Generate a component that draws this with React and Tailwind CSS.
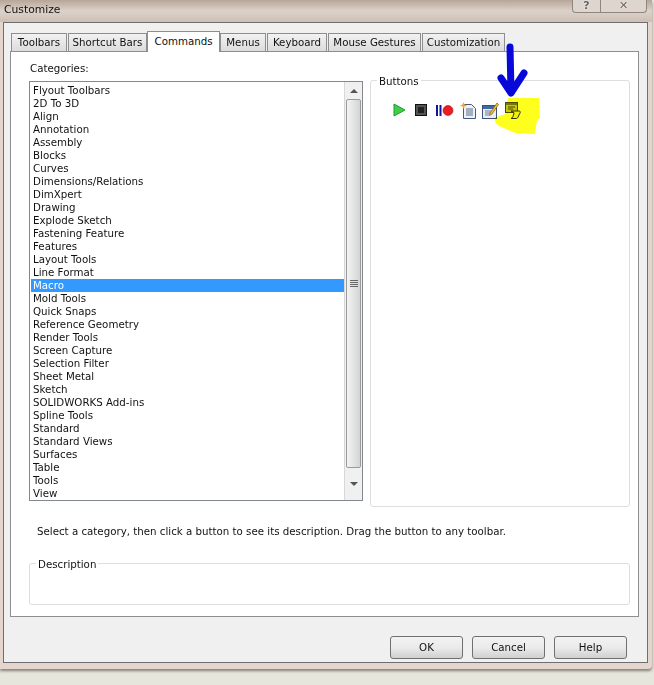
const tabs = [
  { name: "Toolbars", w: "w-[56px]" },
  { name: "Shortcut Bars", w: "w-[79px]" },
  { name: "Commands", w: "w-[73px]", active: true },
  { name: "Menus", w: "w-[46px]" },
  { name: "Keyboard", w: "w-[60px]" },
  { name: "Mouse Gestures", w: "w-[93px]" },
  { name: "Customization", w: "w-[83px]" },
]

const categories = [
  "Flyout Toolbars", "2D To 3D", "Align", "Annotation", "Assembly", "Blocks", "Curves",
  "Dimensions/Relations", "DimXpert", "Drawing", "Explode Sketch", "Fastening Feature",
  "Features", "Layout Tools", "Line Format", "Macro", "Mold Tools", "Quick Snaps",
  "Reference Geometry", "Render Tools", "Screen Capture", "Selection Filter", "Sheet Metal",
  "Sketch", "SOLIDWORKS Add-ins", "Spline Tools", "Standard", "Standard Views", "Surfaces",
  "Table", "Tools", "View",
]

const Tab = ({ name, w, active }) => {
  if (active) {
    return (
      <div className={`${w} h-[21px] -ml-px -mr-px mt-[-2px] pb-[1px] bg-white border border-b-0 border-[#8e8e8e] flex items-center justify-center z-10`}>
        {name}
      </div>
    )
  }
  return (
    <div className={`${w} h-[18px] bg-gradient-to-b from-[#f2f2f2] to-[#dcdcdc] border border-b-0 border-[#8e8e8e] flex items-center justify-center`}>
      {name}
    </div>
  )
}

const DialogButton = ({ label }) => (
  <button className="w-[73px] h-[23px] rounded-[3px] border border-[#707070] bg-gradient-to-b from-[#f2f2f2] via-[#ebebeb] to-[#d0d0d0] flex items-center justify-center">
    {label}
  </button>
)

const MacroIcons = () => (
  <div className="flex items-center h-[16px]">
    <svg width="13" height="14" viewBox="0 0 13 14">
      <path d="M1 1 L12 7 L1 13 Z" fill="#3fcf45" stroke="#1f9a3a" strokeWidth="1" />
    </svg>
    <svg className="ml-[9px]" width="12" height="12" viewBox="0 0 12 12">
      <rect x="0.5" y="0.5" width="11" height="11" fill="#555" stroke="#111" />
      <rect x="3" y="3" width="6" height="6" fill="#222" />
    </svg>
    <svg className="ml-[9px]" width="18" height="13" viewBox="0 0 18 13">
      <rect x="0" y="1" width="2" height="11" fill="#14149a" />
      <rect x="3.5" y="1" width="2" height="11" fill="#14149a" />
      <circle cx="12" cy="6.5" r="5" fill="#ec1c24" stroke="#a01018" strokeWidth="0.6" />
    </svg>
    <svg className="ml-[6px]" width="16" height="17" viewBox="0 0 16 17">
      <path d="M3.5 2.5 H11.5 L15.5 6.5 V16.5 H3.5 Z" fill="#eef2f8" stroke="#46587a" />
      <path d="M6 7 H13 M6 9 H13 M6 11 H13 M6 13 H13" stroke="#5a6a88" strokeWidth="1" />
      <path d="M3.5 0 L4.5 2.5 L7 3.5 L4.5 4.5 L3.5 7 L2.5 4.5 L0 3.5 L2.5 2.5 Z" fill="#f5a623" />
    </svg>
    <svg className="ml-[6px]" width="17" height="17" viewBox="0 0 17 17">
      <rect x="0.5" y="3.5" width="14" height="13" fill="#e8eef8" stroke="#3c5078" />
      <rect x="1" y="4" width="13" height="3" fill="#3f68a8" />
      <path d="M3 9 H9 M3 11 H8 M3 13 H7" stroke="#6a7a96" />
      <path d="M15 1 L16.5 2.5 L10 12 L7.5 13.5 L8 11 Z" fill="#f2c230" stroke="#7a5a10" strokeWidth="0.7" />
    </svg>
    <svg className="ml-[6px]" width="17" height="17" viewBox="0 0 17 17">
      <rect x="0.5" y="0.5" width="12" height="10" fill="#c4c43a" stroke="#4a4a18" />
      <rect x="1" y="1" width="11" height="2" fill="#77771f" />
      <path d="M3 5 H10 M3 7 H8" stroke="#4a4a18" />
      <path d="M6 9 H14 C15.5 9 15.5 10.5 15 11 L13.5 14 C13 16 12 16.5 11 16.5 H6 C7.5 16 8 14.5 8.5 13 L9 11 C9 10 7.5 10 6 9 Z" fill="#f2eda0" stroke="#33330f" />
    </svg>
  </div>
)

const Scrollbar = () => (
  <div className="w-[18px] bg-[#f0f0f0] border-l border-[#d8d8d8] flex flex-col">
    <div className="h-[17px] flex items-center justify-center">
      <div className="w-0 h-0 border-x-[4px] border-x-transparent border-b-[4px] border-b-[#555]"></div>
    </div>
    <div className="h-[369px] mx-px rounded-[2px] border border-[#9a9a9a] bg-gradient-to-r from-[#f4f4f4] to-[#d4d4d4] flex items-center justify-center">
      <div className="w-[8px] flex flex-col gap-px">
        <div className="h-px bg-[#666]"></div>
        <div className="h-px bg-[#666]"></div>
        <div className="h-px bg-[#666]"></div>
        <div className="h-px bg-[#666]"></div>
      </div>
    </div>
    <div className="flex-1 flex items-center justify-center">
      <div className="w-0 h-0 border-x-[4px] border-x-transparent border-t-[4px] border-t-[#555]"></div>
    </div>
  </div>
)

export default function App() {
  return (
    <div className="relative w-[654px] h-[685px] overflow-hidden bg-[#e6e6dc] text-[10.25px] leading-[13px] text-[#111] font-['DejaVu_Sans',sans-serif]">
      <div className="w-[652px] h-[669px] bg-[#e5d6cd] rounded-br-[4px] shadow-[0_2px_3px_rgba(0,0,0,0.45)] flex flex-col">
        <div className="h-[22px] shrink-0 bg-gradient-to-b from-[#b7a598] via-[#ddd2ca] to-[#cdbfb5] flex justify-between pl-[4px] pr-[5px]">
          <span className="pt-[3px] text-[10.75px]">Customize</span>
          <div className="w-[75px] h-[13px] flex border border-t-0 border-[#8f8680] rounded-b-[4px] bg-[#ded5ce] text-[#666] text-[11px] leading-[12px] font-bold [text-shadow:0_0_2px_#fff]">
            <div className="w-[28px] border-r border-[#8f8680] text-center">?</div>
            <div className="flex-1 text-center">✕</div>
          </div>
        </div>

        <div className="ml-[3px] mr-[4px] h-[641px] bg-[#f0f0f0] border border-[#6e6e6e] flex flex-col">
          <div className="pl-[6px] pr-[8px] pt-[10px] flex flex-col">
            <div className="flex gap-px ml-[1px] h-[18px] items-start">
              {tabs.map((t) => (
                <Tab key={t.name} {...t} />
              ))}
            </div>
            <div className="h-[566px] bg-white border border-[#8e8e8e] pl-[18px] pr-[8px] flex flex-col">
              <p className="mt-[10px] ml-[1px] h-[13px]">Categories:</p>
              <div className="mt-[6px] flex gap-[7px]">
                <div className="w-[334px] h-[420px] border border-[#828790] flex shrink-0">
                  <ul className="flex-1 pt-[2px] pl-px">
                    {categories.map((c) => (
                      <li
                        key={c}
                        className={c === "Macro" ? "h-[13px] pl-[2px] bg-[#3399ff] text-white" : "h-[13px] pl-[2px]"}
                      >
                        {c}
                      </li>
                    ))}
                  </ul>
                  <Scrollbar />
                </div>
                <div className="relative flex-1 h-[427px] -mt-px border border-[#dcdfe2] rounded-[3px] pl-[22px] pt-[21px]">
                  <span className="absolute -top-[6px] left-[6px] bg-white px-[2px]">Buttons</span>
                  <MacroIcons />
                </div>
              </div>
              <p className="mt-[18px] ml-[8px] h-[13px]">
                Select a category, then click a button to see its description. Drag the button to any toolbar.
              </p>
              <div className="relative mt-[25px] h-[42px] border border-[#dcdfe2] rounded-[3px]">
                <span className="absolute -top-[6px] left-[6px] bg-white px-[2px]">Description</span>
              </div>
            </div>
          </div>
          <div className="flex justify-end gap-[9px] pr-[20px] mt-[19px]">
            <DialogButton label="OK" />
            <DialogButton label="Cancel" />
            <DialogButton label="Help" />
          </div>
        </div>
      </div>

      {/* hand drawn marks on top of the screenshot */}
      <svg className="absolute inset-0 pointer-events-none" width="654" height="685" viewBox="0 0 654 685">
        <path d="M508 98 L539 98 L540 118 L537 120 L535 134 L515 133 L497 125 L494 118 L505 114 Z" fill="#ffff1e" style={{ mixBlendMode: "multiply" }} />
        <path d="M510 47 L511 92 M501 78 L511 93 L524 73" fill="none" stroke="#0808d8" strokeWidth="7" strokeLinecap="round" strokeLinejoin="round" />
      </svg>
    </div>
  )
}
